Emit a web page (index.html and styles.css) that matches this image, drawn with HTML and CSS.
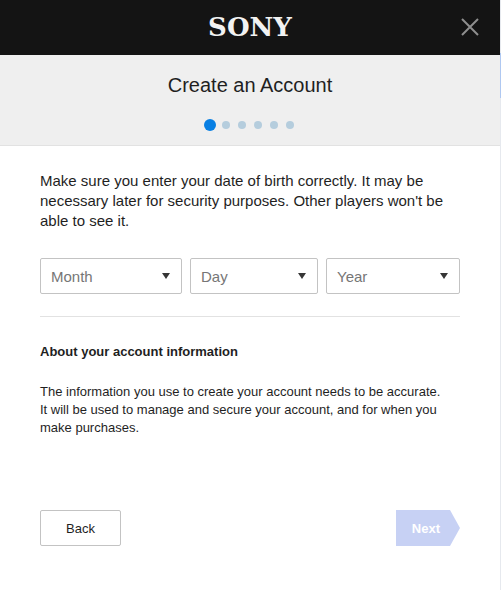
FILE: index.html
```html
<!DOCTYPE html>
<html lang="en">
<head>
<meta charset="utf-8">
<meta name="viewport" content="width=device-width, initial-scale=1">
<title>Create an Account</title>
<link rel="stylesheet" href="styles.css">
</head>
<body>
<div class="dialog">
  <header class="brand-bar">
    <span class="logo">SONY</span>
    <button class="close" type="button" aria-label="Close">
      <svg width="18" height="18" viewBox="0 0 18 18" aria-hidden="true"><path d="M1 1 17 17M17 1 1 17" fill="none" stroke="#8f8f8f" stroke-width="2"/></svg>
    </button>
  </header>
  <div class="heading">
    <h1>Create an Account</h1>
    <ol class="steps" aria-label="Progress">
      <li class="current"></li><li></li><li></li><li></li><li></li><li></li>
    </ol>
  </div>
  <form class="content">
    <p class="intro">Make sure you enter your date of birth correctly. It may be necessary later for security purposes. Other players won't be able to see it.</p>
    <div class="birth-date">
      <div class="field"><select aria-label="Month"><option>Month</option></select><svg width="8" height="6" viewBox="0 0 8 6" aria-hidden="true"><path d="M0 0H8L4 6Z"/></svg></div>
      <div class="field"><select aria-label="Day"><option>Day</option></select><svg width="8" height="6" viewBox="0 0 8 6" aria-hidden="true"><path d="M0 0H8L4 6Z"/></svg></div>
      <div class="field"><select aria-label="Year"><option>Year</option></select><svg width="8" height="6" viewBox="0 0 8 6" aria-hidden="true"><path d="M0 0H8L4 6Z"/></svg></div>
    </div>
    <section class="about">
      <h2>About your account information</h2>
      <p>The information you use to create your account needs to be accurate. It will be used to manage and secure your account, and for when you make purchases.</p>
    </section>
    <div class="actions">
      <button class="back" type="button">Back</button>
      <button class="next" type="submit" disabled>Next</button>
    </div>
  </form>
  <div class="edge-mark"></div>
</div>
</body>
</html>
```
FILE: styles.css
```css
* { box-sizing: border-box; }
body {
  margin: 0;
  background: #fff;
  color: #1f1f1f;
  font-family: "Liberation Sans", Arial, sans-serif;
}
h1, h2, p, ol { margin: 0; padding: 0; }
button, select { font-family: inherit; }

.dialog {
  position: relative;
  min-height: 100vh;
  border-right: 1px solid #e6e9ee;
}
.brand-bar {
  display: grid;
  grid-template-columns: 1fr auto 1fr;
  align-items: center;
  height: 55px;
  padding: 0 21px 2px;
  background: #141414;
}
.logo {
  grid-column: 2;
  color: #f2f2f2;
  font: bold 26px/28px "DejaVu Serif", serif;
}
.close {
  justify-self: end;
  display: flex;
  padding: 0;
  border: 0;
  background: none;
}
.heading {
  display: flex;
  flex-direction: column;
  align-items: center;
  gap: 19px;
  padding: 18px 20px 11px;
  border-bottom: 1px solid #e2e2e2;
  background: #efefef;
}
.heading h1 {
  font-size: 20px;
  font-weight: 400;
  line-height: 24px;
}
.steps {
  display: flex;
  align-items: center;
  gap: 8px;
  height: 18px;
  padding-right: 2px;
  list-style: none;
}
.steps li {
  width: 8px;
  height: 8px;
  border-radius: 50%;
  background: #b5cddd;
}
.steps .current {
  width: 12px;
  height: 12px;
  margin-right: -2px;
  background: #087fe3;
}
.content { padding: 25px 40px 44px; }
.intro {
  font-size: 15px;
  line-height: 20px;
}
.birth-date {
  display: grid;
  grid-template-columns: 142fr 128fr 134fr;
  gap: 8px;
  margin-top: 27px;
}
.field { position: relative; }
.field select {
  appearance: none;
  display: block;
  width: 100%;
  height: 36px;
  padding: 0 10px;
  border: 1px solid #c3c3c3;
  border-radius: 2px;
  background: #fff;
  color: #767676;
  font-size: 15px;
}
.field svg {
  position: absolute;
  top: 15px;
  right: 12px;
  fill: #363636;
  pointer-events: none;
}
.about {
  margin-top: 22px;
  padding-top: 26px;
  border-top: 1px solid #e2e2e2;
  font-size: 13px;
  line-height: 18px;
}
.about h2 {
  margin-bottom: 22px;
  font-size: 13px;
}
.about p { padding-right: 16px; }
.actions {
  display: flex;
  justify-content: space-between;
  margin-top: 73px;
}
.actions button {
  height: 36px;
  font-size: 13px;
}
.back {
  padding: 0 25px;
  border: 1px solid #c3c3c3;
  border-radius: 2px;
  background: #fff;
  color: #1f1f1f;
}
.next {
  padding: 0 20px 0 16px;
  border: 0;
  background: #c7d1f4;
  color: #fff;
  font-weight: 700;
  clip-path: polygon(0 0, calc(100% - 10px) 0, 100% 50%, calc(100% - 10px) 100%, 0 100%);
}
.edge-mark {
  position: absolute;
  top: 53px;
  right: -1px;
  width: 1px;
  height: 45px;
  background: #afc8f1;
}
```
